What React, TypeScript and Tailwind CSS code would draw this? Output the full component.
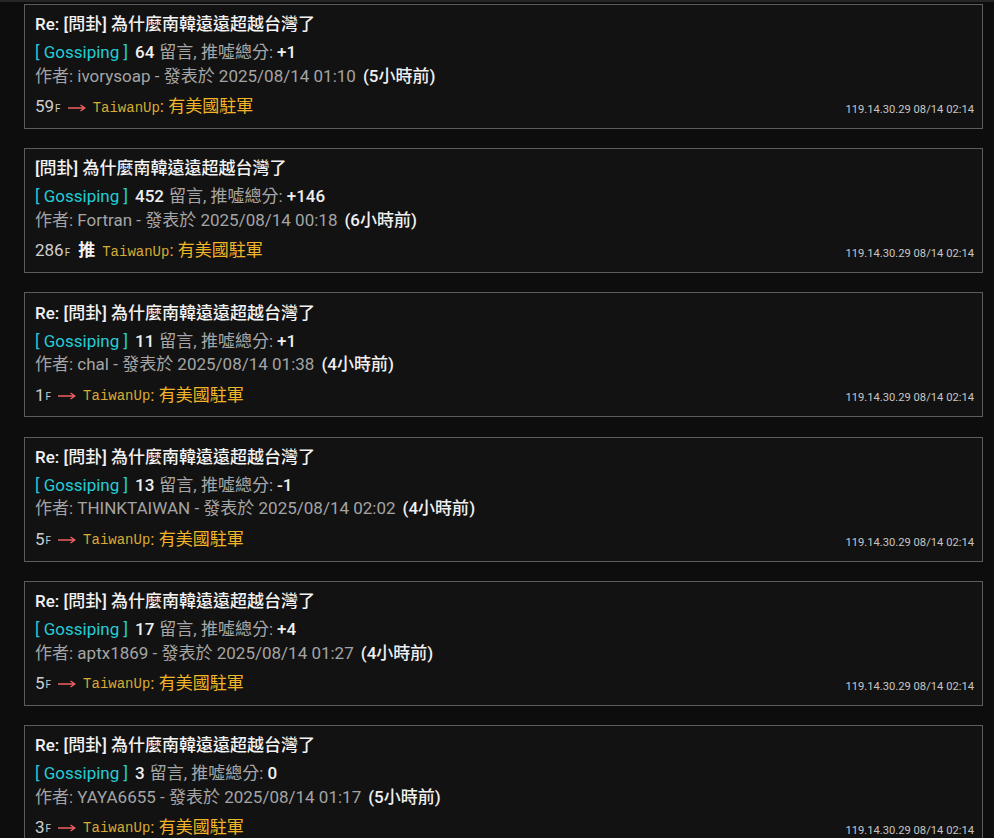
import type { ReactNode } from "react";

type Post = {
  re: boolean;
  comments: number;
  score: string;
  author: string;
  posted: string;
  ago: string;
  floor: number;
  tag: "arrow" | "push";
};

const posts: Post[] = [
  { re: true, comments: 64, score: "+1", author: "ivorysoap", posted: "2025/08/14 01:10", ago: "5小時前", floor: 59, tag: "arrow" },
  { re: false, comments: 452, score: "+146", author: "Fortran", posted: "2025/08/14 00:18", ago: "6小時前", floor: 286, tag: "push" },
  { re: true, comments: 11, score: "+1", author: "chal", posted: "2025/08/14 01:38", ago: "4小時前", floor: 1, tag: "arrow" },
  { re: true, comments: 13, score: "-1", author: "THINKTAIWAN", posted: "2025/08/14 02:02", ago: "4小時前", floor: 5, tag: "arrow" },
  { re: true, comments: 17, score: "+4", author: "aptx1869", posted: "2025/08/14 01:27", ago: "4小時前", floor: 5, tag: "arrow" },
  { re: true, comments: 3, score: "0", author: "YAYA6655", posted: "2025/08/14 01:17", ago: "5小時前", floor: 3, tag: "arrow" },
];

function Line({ children, className = "" }: { children: ReactNode; className?: string }) {
  return <div className={`flex items-center whitespace-nowrap ${className}`}>{children}</div>;
}

function Arrow() {
  return (
    <svg width="18" height="8" viewBox="0 0 18 8" className="ml-[7px] mt-[1px]">
      <path d="M0 4H16.5M12.5 1L16.8 4L12.5 7" fill="none" stroke="#ef6262" strokeWidth="1.3" />
    </svg>
  );
}

function PostCard({ post }: { post: Post }) {
  return (
    <div className="h-[125px] shrink-0 border border-[#5c5c5c] bg-[#121212] pt-[8px] pl-[10px] pr-[8px]">
      <Line className="h-[24px] text-[17px] font-medium text-[#f2f2f2]">
        {post.re ? "Re: " : ""}[問卦] 為什麼南韓遠遠超越台灣了
      </Line>

      <Line className="mt-[4px] h-[24px] text-[17px]">
        <span className="text-[#22ccd6]">[ Gossiping ]</span>
        <span className="ml-[7px] font-medium text-[#f0f0f0]">{post.comments}</span>
        <span className="ml-[5px] text-[#a6a6a6]">留言, 推噓總分:</span>
        <span className="ml-[4px] font-medium text-[#f0f0f0]">{post.score}</span>
      </Line>

      <Line className="h-[23px] text-[17px] text-[#a4a4a4]">
        <span>
          作者: {post.author} - 發表於 {post.posted}
        </span>
        <span className="ml-[7px] font-medium text-[#f0f0f0]">({post.ago})</span>
      </Line>

      <div className="mt-[7px] flex h-[24px] items-center justify-between whitespace-nowrap">
        <div className="flex items-center text-[17px]">
          <span className="text-[#cfcfcf]">{post.floor}</span>
          <span className="ml-[1px] mt-[2px] text-[10px] text-[#cfcfcf]">F</span>
          {post.tag === "arrow" ? (
            <Arrow />
          ) : (
            <span className="ml-[8px] font-bold text-[#f2f2f2]">推</span>
          )}
          <span className="ml-[7px] mt-[2px] font-['Liberation_Mono',monospace] text-[14px] text-[#d5ac34]">
            TaiwanUp
          </span>
          <span className="text-[#f2b527]">: 有美國駐軍</span>
        </div>
        <span className="mt-[7px] text-[11.2px] text-[#c6c6c6]">119.14.30.29 08/14 02:14</span>
      </div>
    </div>
  );
}

export default function App() {
  return (
    <div className="h-[838px] overflow-hidden bg-[#0d0d0d] font-['Roboto','Noto_Sans_CJK_TC',sans-serif]">
      <div className="h-[2px] bg-[#262626]" />
      <div className="flex flex-col gap-[19.2px] pt-[2px] pl-[24px] pr-[11px]">
        {posts.map((p, i) => (
          <PostCard key={i} post={p} />
        ))}
      </div>
    </div>
  );
}
